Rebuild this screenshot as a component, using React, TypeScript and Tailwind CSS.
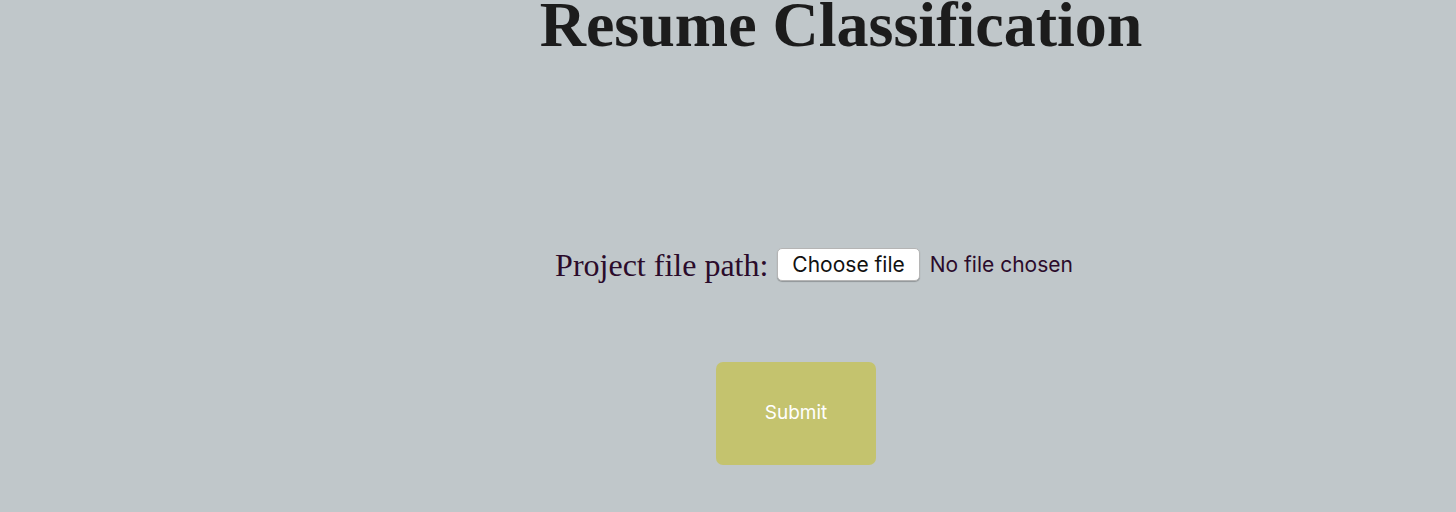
import React from 'react';

const App: React.FC = () => {
  return (
    <div className="min-h-[512px] w-full bg-[#c0c7ca] overflow-hidden">
      <h1 className="pl-[226px] text-center text-[64px] font-bold leading-none text-[#1c1c1c] font-['Liberation_Serif',serif] -mt-[7px]">
        Resume Classification
      </h1>
      <div className="mt-[191px] flex items-center justify-center pl-[172px]">
        <span className="text-[32px] leading-none text-[#2b0b2b] font-['Liberation_Serif',serif]">Project file path:</span>
        <label className="ml-[9px] flex items-center cursor-pointer">
          <span className="h-[33px] px-[14px] flex items-center rounded-[5px] border border-[#b5b5b5] bg-white shadow-[0_1px_1px_rgba(0,0,0,0.25)] text-[21px] text-[#111] font-['Inter',sans-serif]">
            Choose file
          </span>
          <span className="ml-[10px] text-[21px] text-[#2b0b2b] font-['Inter',sans-serif]">No file chosen</span>
          <input type="file" className="hidden" />
        </label>
      </div>
      <div className="mt-[81px] flex justify-center pl-[136px]">
        <button className="w-[160px] h-[103px] rounded-[7px] bg-[#c4c36e] text-white text-[19px] font-['Inter',sans-serif]">
          Submit
        </button>
      </div>
    </div>
  );
};

export default App;
